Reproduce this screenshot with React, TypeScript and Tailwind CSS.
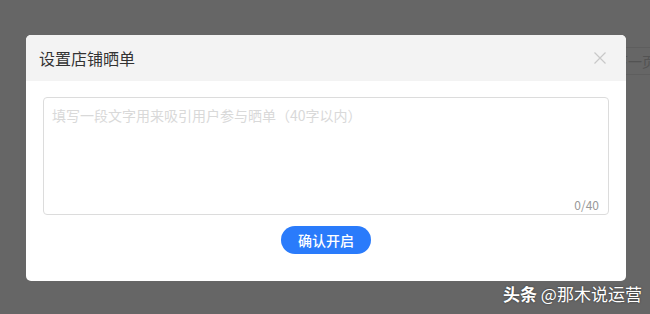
import React, { useState } from 'react';

const FONT = '"Noto Sans CJK SC", "Noto Sans", sans-serif';

const CloseIcon: React.FC = () => (
  <svg className="w-3 h-3" viewBox="0 0 12 12" fill="none" stroke="#c8c8c8" strokeWidth={1.2}>
    <path d="M0.5 0.5L11.5 11.5M11.5 0.5L0.5 11.5" />
  </svg>
);

const App: React.FC = () => {
  const [text, setText] = useState('');

  return (
    <div className="relative w-[650px] h-[314px] overflow-hidden bg-white" style={{ fontFamily: FONT }}>
      {/* page behind the mask */}
      <div className="flex pt-[47px] pl-[600px]">
        <button className="h-[28px] px-[13px] border border-[#ececec] rounded text-sm text-[#d0d0d0] whitespace-nowrap leading-none">
          下一页
        </button>
      </div>

      {/* mask */}
      <div className="absolute inset-0 bg-black/60 pt-[35px] pl-[26px]">
        <div className="w-[600px] bg-white rounded-[5px] overflow-hidden">
          <div className="h-[46px] bg-[#f3f3f3] flex items-center justify-between pl-[13px] pr-[20px]">
            <span className="text-base text-[#333] leading-none">设置店铺晒单</span>
            <button className="flex items-center">
              <CloseIcon />
            </button>
          </div>

          <div className="pt-[16px] pl-[17px] pr-[17px] pb-[27px]">
            <div className="relative w-[566px] h-[118px] border border-[#dcdcdc] rounded">
              <textarea
                value={text}
                maxLength={40}
                onChange={e => setText(e.target.value)}
                placeholder="填写一段文字用来吸引用户参与晒单（40字以内）"
                className="w-full h-full resize-none outline-none px-[8px] pt-[7px] text-sm text-[#333] placeholder:text-[#d9d9d9] bg-transparent"
                style={{ fontFamily: FONT }}
              />
              <span className="absolute right-[9px] bottom-[3px] text-xs text-[#999] leading-none">
                {text.length}/40
              </span>
            </div>

            <div className="flex justify-center mt-[11px]">
              <button className="w-[90px] h-[28px] rounded-full bg-[#2a7bfb] text-white text-sm font-medium leading-none">
                确认开启
              </button>
            </div>
          </div>
        </div>
      </div>

      {/* watermark */}
      <div
        className="absolute left-[503px] top-[285px] text-[17px] text-white whitespace-nowrap leading-none"
        style={{ textShadow: '0 0 2px rgba(0,0,0,0.6)' }}
      >
        <span className="font-bold">头条</span> @那木说运营
      </div>
    </div>
  );
};

export default App;
